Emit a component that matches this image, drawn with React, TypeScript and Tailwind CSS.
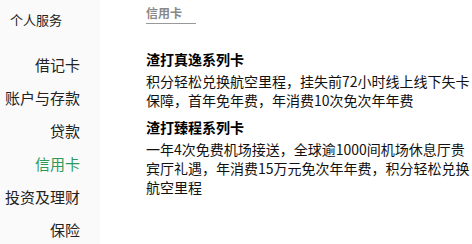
import React from "react";

const items = [
  { label: "借记卡", active: false },
  { label: "账户与存款", active: false },
  { label: "贷款", active: false },
  { label: "信用卡", active: true },
  { label: "投资及理财", active: false },
  { label: "保险", active: false },
];

export default function App() {
  return (
    <div
      className="flex w-[472px] h-[244px] bg-white overflow-hidden text-[#111]"
      style={{ fontFamily: '"Noto Sans CJK SC", "Noto Sans", sans-serif' }}
    >
      <aside className="w-[100px] h-full bg-[#fafafa] shrink-0">
        <div className="pt-[10px] pl-[10px] h-[30px] leading-[20px] text-[13px] text-[#222]">个人服务</div>
        <ul className="mt-[18px] pr-[20px] text-right">
          {items.map((it) => (
            <li
              key={it.label}
              className={
                "h-[33px] leading-[33px] text-[15px] " +
                (it.active ? "text-[#2e9a5a]" : "text-[#222]")
              }
            >
              {it.label}
            </li>
          ))}
        </ul>
      </aside>
      <main className="flex-1 pl-[46px] flex flex-col items-start">
        <div className="mt-[5px] w-[50px] pb-[2px] border-b border-[#999] text-[12px] leading-[16px] font-bold text-[#888]">
          信用卡
        </div>
        <section className="mt-[26px]">
          <h3 className="text-[14px] leading-[18px] font-bold text-black">渣打真逸系列卡</h3>
          <p className="mt-[4px] text-[14px] leading-[19px] whitespace-nowrap">
            积分轻松兑换航空里程，挂失前72小时线上线下失卡
            <br />
            保障，首年免年费，年消费10次免次年年费
          </p>
        </section>
        <section className="mt-[8px]">
          <h3 className="text-[14px] leading-[18px] font-bold text-black">渣打臻程系列卡</h3>
          <p className="mt-[4px] text-[14px] leading-[19px] whitespace-nowrap">
            一年4次免费机场接送，全球逾1000间机场休息厅贵
            <br />
            宾厅礼遇，年消费15万元免次年年费，积分轻松兑换
            <br />
            航空里程
          </p>
        </section>
      </main>
    </div>
  );
}
